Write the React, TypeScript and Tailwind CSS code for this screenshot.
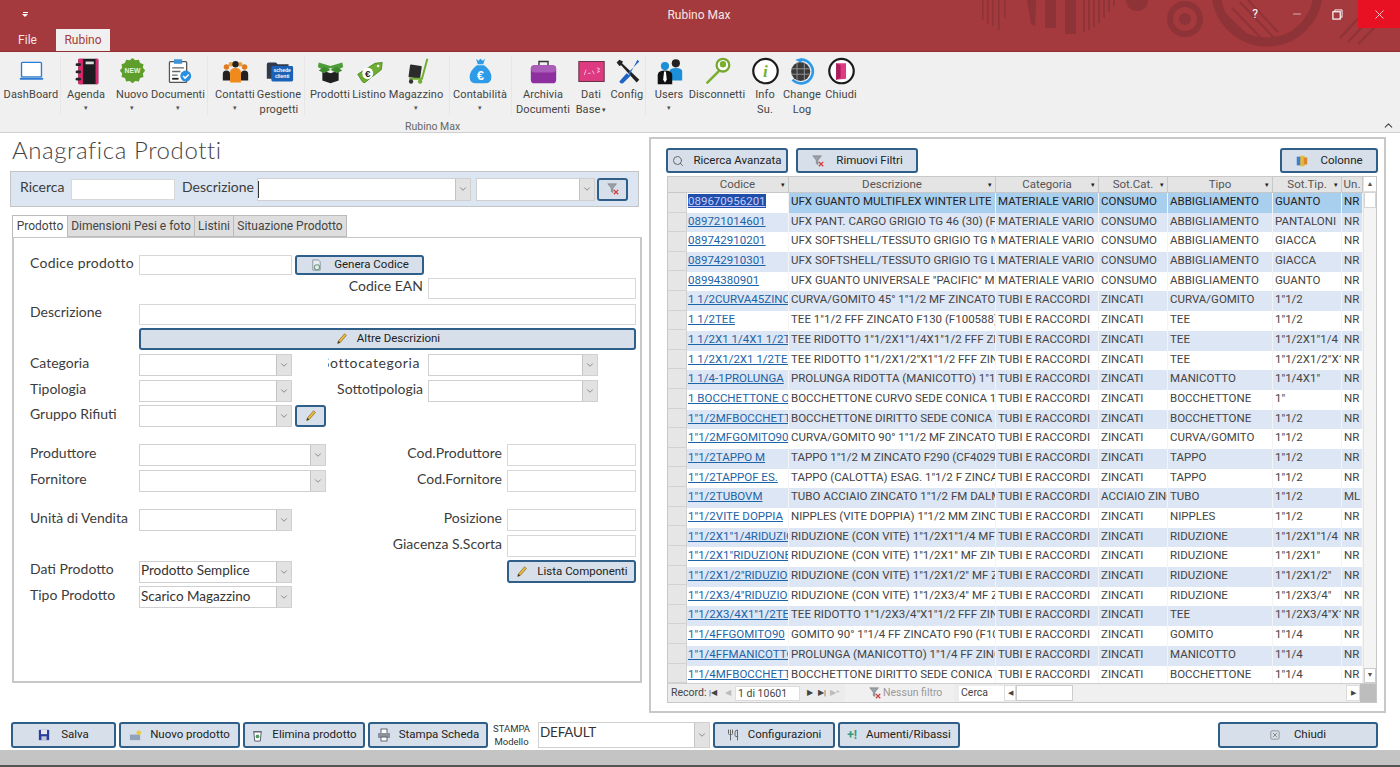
import React from "react";
import { ChevronDown, ChevronUp, Minus, Search, Utensils, X } from "lucide-react";

type Row = [string, string, string, string, string, string, string];

const M = "MATERIALE VARIO";
const T = "TUBI E RACCORDI";
const Z = "ZINCATI";
const rows: Row[] = [
  ["089670956201", "UFX GUANTO MULTIFLEX WINTER LITE M (F5", M, "CONSUMO", "ABBIGLIAMENTO", "GUANTO", "NR"],
  ["089721014601", "UFX PANT. CARGO GRIGIO TG 46 (30) (F5", M, "CONSUMO", "ABBIGLIAMENTO", "PANTALONI", "NR"],
  ["089742910201", "UFX SOFTSHELL/TESSUTO GRIGIO TG M (F5", M, "CONSUMO", "ABBIGLIAMENTO", "GIACCA", "NR"],
  ["089742910301", "UFX SOFTSHELL/TESSUTO GRIGIO TG L (F5", M, "CONSUMO", "ABBIGLIAMENTO", "GIACCA", "NR"],
  ["08994380901", "UFX GUANTO UNIVERSALE \"PACIFIC\" M.", M, "CONSUMO", "ABBIGLIAMENTO", "GUANTO", "NR"],
  ["1 1/2CURVA45ZINCATA", "CURVA/GOMITO 45° 1\"1/2 MF ZINCATO F120", T, Z, "CURVA/GOMITO", "1\"1/2", "NR"],
  ["1 1/2TEE", "TEE 1\"1/2 FFF ZINCATO F130 (F100588)", T, Z, "TEE", "1\"1/2", "NR"],
  ["1 1/2X1 1/4X1 1/2TEE", "TEE RIDOTTO 1\"1/2X1\"1/4X1\"1/2 FFF ZINCATO", T, Z, "TEE", "1\"1/2X1\"1/4", "NR"],
  ["1 1/2X1/2X1 1/2TEE", "TEE RIDOTTO 1\"1/2X1/2\"X1\"1/2 FFF ZINCATO", T, Z, "TEE", "1\"1/2X1/2\"X1\"", "NR"],
  ["1 1/4-1PROLUNGA", "PROLUNGA RIDOTTA (MANICOTTO) 1\"1/4X1\"", T, Z, "MANICOTTO", "1\"1/4X1\"", "NR"],
  ["1 BOCCHETTONE CURVO", "BOCCHETTONE CURVO SEDE CONICA 1\" MF", T, Z, "BOCCHETTONE", "1\"", "NR"],
  ["1\"1/2MFBOCCHETTONE", "BOCCHETTONE DIRITTO SEDE CONICA 1\"1/2", T, Z, "BOCCHETTONE", "1\"1/2", "NR"],
  ["1\"1/2MFGOMITO90", "CURVA/GOMITO 90° 1\"1/2 MF ZINCATO F90", T, Z, "CURVA/GOMITO", "1\"1/2", "NR"],
  ["1\"1/2TAPPO M", "TAPPO 1\"1/2 M ZINCATO F290 (CF402900)", T, Z, "TAPPO", "1\"1/2", "NR"],
  ["1\"1/2TAPPOF ES.", "TAPPO (CALOTTA) ESAG. 1\"1/2 F ZINCATO", T, Z, "TAPPO", "1\"1/2", "NR"],
  ["1\"1/2TUBOVM", "TUBO ACCIAIO ZINCATO 1\"1/2 FM DALMINE", T, "ACCIAIO ZINCATO", "TUBO", "1\"1/2", "ML"],
  ["1\"1/2VITE DOPPIA", "NIPPLES (VITE DOPPIA) 1\"1/2 MM ZINCATO", T, Z, "NIPPLES", "1\"1/2", "NR"],
  ["1\"1/2X1\"1/4RIDUZIONE", "RIDUZIONE (CON VITE) 1\"1/2X1\"1/4 MF ZINCATO", T, Z, "RIDUZIONE", "1\"1/2X1\"1/4", "NR"],
  ["1\"1/2X1\"RIDUZIONE", "RIDUZIONE (CON VITE) 1\"1/2X1\" MF ZINCATO", T, Z, "RIDUZIONE", "1\"1/2X1\"", "NR"],
  ["1\"1/2X1/2\"RIDUZIONE", "RIDUZIONE (CON VITE) 1\"1/2X1/2\" MF ZINCATO", T, Z, "RIDUZIONE", "1\"1/2X1/2\"", "NR"],
  ["1\"1/2X3/4\"RIDUZIONE", "RIDUZIONE (CON VITE) 1\"1/2X3/4\" MF ZINCATO", T, Z, "RIDUZIONE", "1\"1/2X3/4\"", "NR"],
  ["1\"1/2X3/4X1\"1/2TEE", "TEE RIDOTTO 1\"1/2X3/4\"X1\"1/2 FFF ZINCATO", T, Z, "TEE", "1\"1/2X3/4\"X1\"", "NR"],
  ["1\"1/4FFGOMITO90", "GOMITO 90° 1\"1/4 FF ZINCATO F90 (F100", T, Z, "GOMITO", "1\"1/4", "NR"],
  ["1\"1/4FFMANICOTTO", "PROLUNGA (MANICOTTO) 1\"1/4 FF ZINCATO", T, Z, "MANICOTTO", "1\"1/4", "NR"],
  ["1\"1/4MFBOCCHETTONE", "BOCCHETTONE DIRITTO SEDE CONICA 1\"1/4", T, Z, "BOCCHETTONE", "1\"1/4", "NR"],
];

const colWidths = ["w-[102px]", "w-[207px]", "w-[103px]", "w-[69px]", "w-[105px]", "w-[69px]", "w-[21px]"];
const headers = ["Codice", "Descrizione", "Categoria", "Sot.Cat.", "Tipo", "Sot.Tip.", "Un."];

const burst = Array.from({ length: 24 }, (_, i) => {
  const r = i % 2 === 0 ? 14 : 11.8;
  const a = (i * Math.PI) / 12;
  return `${(16 + r * Math.sin(a)).toFixed(1)},${(15 + r * Math.cos(a)).toFixed(1)}`;
}).join(" ");

function Ico({ children }: { children: React.ReactNode }) {
  return (
    <svg viewBox="0 0 32 32" className="w-[29px] h-[29px]">
      {children}
    </svg>
  );
}

const ribbonIcons: Record<string, React.ReactNode> = {
  DashBoard: (
    <Ico>
      <rect x="5" y="6" width="22" height="16" rx="1" fill="#fff" stroke="#2b7cd3" strokeWidth="1.5" />
      <rect x="3" y="23" width="26" height="2" rx="1" fill="#2b7cd3" />
    </Ico>
  ),
  Agenda: (
    <Ico>
      <rect x="7" y="2" width="22" height="28" rx="1.5" fill="#1c1b1f" />
      <rect x="7" y="2" width="5" height="28" fill="#e0246f" />
      <rect x="26" y="2" width="3" height="28" fill="#d9286f" />
      <rect x="4" y="7" width="6" height="3" rx="1.5" fill="#222" />
      <rect x="4" y="15" width="6" height="3" rx="1.5" fill="#222" />
      <rect x="4" y="23" width="6" height="3" rx="1.5" fill="#222" />
      <rect x="15" y="5" width="9" height="3" fill="#ddd" />
    </Ico>
  ),
  Nuovo: (
    <Ico>
      <polygon points={burst} fill="#5d9e2d" />
      <text x="16" y="18" textAnchor="middle" fontSize="7.5" fontWeight="700" fill="#e9f6d8" fontFamily="Liberation Sans, sans-serif">
        NEW
      </text>
    </Ico>
  ),
  Documenti: (
    <Ico>
      <rect x="6" y="5" width="19" height="23" rx="1" fill="#fff" stroke="#555" strokeWidth="1.4" />
      <rect x="11" y="2.5" width="9" height="5" fill="#3f94d8" />
      <path d="M9 12h13M9 16h9M9 20h6" stroke="#666" strokeWidth="1.4" />
      <rect x="9" y="23" width="7" height="2" fill="#222" />
      <circle cx="24" cy="21" r="6" fill="#2b8fe0" />
      <path d="M21 21l2.3 2.3 4-4" stroke="#fff" strokeWidth="1.6" fill="none" />
    </Ico>
  ),
  Contatti: (
    <Ico>
      <circle cx="6" cy="11" r="3" fill="#e07b22" />
      <circle cx="26" cy="11" r="3" fill="#e07b22" />
      <circle cx="11" cy="8" r="2.6" fill="#e8a13c" />
      <circle cx="21" cy="8" r="2.6" fill="#e8a13c" />
      <path d="M2 26v-7q0-4 4-4t4 4v7zM22 26v-7q0-4 4-4t4 4v7z" fill="#222" />
      <circle cx="16" cy="8" r="3.5" fill="#222" />
      <path d="M10 28v-11q0-5 6-5t6 5v11z" fill="#f08a1d" />
    </Ico>
  ),
  "Gestione progetti": (
    <Ico>
      <path d="M2 8q0-2 2-2h8l2 2h12v16H2z" fill="#2f3b4a" />
      <rect x="7" y="10" width="24" height="17" rx="1.5" fill="#1a62b8" />
      <text x="19" y="17" textAnchor="middle" fontSize="5.6" fontWeight="700" fill="#fff" fontFamily="Liberation Sans, sans-serif">
        schede
      </text>
      <text x="19" y="23" textAnchor="middle" fontSize="5.6" fontWeight="700" fill="#fff" fontFamily="Liberation Sans, sans-serif">
        clienti
      </text>
    </Ico>
  ),
  Prodotti: (
    <Ico>
      <path d="M7 15l9 3 9-3v11l-9 3-9-3z" fill="#1f1f1f" />
      <path d="M16 10L3 6l-1 5 7 4 7-3zM16 10l13-4 1 5-7 4-7-3z" fill="#4f9c3a" />
      <path d="M3 15l6 3 7-4-7-3zM29 15l-6 3-7-4 7-3z" fill="#3e8a2e" />
    </Ico>
  ),
  Listino: (
    <Ico>
      <path d="M3 19L22 7l8-1-1 8-18 14q-2 1-3-1z" fill="#6fae33" stroke="#4f8a22" />
      <circle cx="25.5" cy="10" r="1.4" fill="#fff" />
      <ellipse cx="14" cy="18" rx="6" ry="6.5" fill="#fff" />
      <text x="14" y="22" textAnchor="middle" fontSize="11" fontWeight="700" fill="#222" fontFamily="Liberation Sans, sans-serif">
        €
      </text>
    </Ico>
  ),
  Magazzino: (
    <Ico>
      <rect x="8" y="9" width="13" height="14" rx="1" fill="#2b2b2b" transform="rotate(8 14 16)" />
      <path d="M28 2l-6 22H8" stroke="#6fae33" strokeWidth="2.2" fill="none" />
      <circle cx="10" cy="27" r="2.4" fill="#333" />
      <circle cx="20" cy="27" r="2.4" fill="#6fae33" />
    </Ico>
  ),
  Contabilità: (
    <Ico>
      <path d="M11 2l2.500 2 2.500-2 2.500 2 2.500-2-2 6h-6z" fill="#2e9be8" />
      <path d="M12 9h8q8 6 8 13 0 7-7 7H11q-7 0-7-7 0-7 8-13z" fill="#2e9be8" />
      <text x="16" y="25" textAnchor="middle" fontSize="14" fontWeight="700" fill="#fff" fontFamily="Liberation Sans, sans-serif">
        €
      </text>
    </Ico>
  ),
  "Archivia Documenti": (
    <Ico>
      <path d="M11 9V5h10v4" stroke="#333" strokeWidth="1.5" fill="none" />
      <rect x="2" y="9" width="28" height="20" rx="4" fill="#8d2f9e" />
      <rect x="2" y="9" width="28" height="8" rx="4" fill="#a95cb8" />
    </Ico>
  ),
  "Dati Base": (
    <Ico>
      <rect x="2" y="5" width="28" height="22" fill="#dd3a82" stroke="#5a2a3c" strokeWidth="1" />
      <path d="M8 20l2-6M12 18h3M17 15l2 4M22 12l3 1-2 2 2 1-3 1" stroke="#f6c5da" strokeWidth="1" fill="none" />
    </Ico>
  ),
  Config: (
    <Ico>
      <path d="M7 3l-3 3 3 4 2-1 17 19 3-3L10 7l1-2z" fill="#222" />
      <path d="M27 3l2 2-12 12 3 3-9 9q-3 1-4-2l8-9 3 2z" fill="#1f63c4" />
    </Ico>
  ),
  Users: (
    <Ico>
      <circle cx="23" cy="7" r="4.500" fill="#222" />
      <path d="M16 26V16q0-4 7-4t7 4v10z" fill="#1b8fd8" />
      <circle cx="11" cy="10" r="4.500" fill="#1b8fd8" />
      <path d="M3 30V20q0-5 8-5t8 5v10z" fill="#111" />
      <path d="M10 16h2l1 9-2 3-2-3z" fill="#fff" />
    </Ico>
  ),
  Disconnetti: (
    <Ico>
      <path d="M3 28l14-14 2 2L5 30z" fill="#7bb02e" />
      <circle cx="22" cy="9" r="7" fill="#fff" stroke="#77a832" strokeWidth="2.500" />
      <circle cx="22" cy="8" r="3.500" fill="#7bb02e" />
    </Ico>
  ),
  "Info Su.": (
    <Ico>
      <circle cx="16" cy="15.500" r="13.500" fill="#fff" stroke="#1b1b1b" strokeWidth="2.400" />
      <text x="16" y="22" textAnchor="middle" fontSize="19" fontStyle="italic" fontWeight="700" fill="#7bb02e" fontFamily="Liberation Serif, serif">
        i
      </text>
    </Ico>
  ),
  "Change Log": (
    <Ico>
      <path d="M14 3a13 13 0 1 1-9 22" stroke="#2e9be8" strokeWidth="3" fill="none" />
      <circle cx="14" cy="16" r="10.500" fill="#3a3a3a" />
      <path d="M4 13h20M4 19h20M10 6v20M18 6v20" stroke="#999" strokeWidth="1" />
      <path d="M8 3l7-2v6z" fill="#2e9be8" />
    </Ico>
  ),
  Chiudi: (
    <Ico>
      <circle cx="16" cy="15.500" r="13.500" fill="#fff" stroke="#1b1b1b" strokeWidth="2.400" />
      <path d="M10 7h11v17l-11 1z" fill="#e03a85" />
      <path d="M10 7l5 2v14l-5 2z" fill="#a81f5c" />
    </Ico>
  ),
};

function RibbonItem({ label, width, caret }: { label: string; width: string; caret?: boolean }) {
  const parts = label.split(" ");
  return (
    <div className={`${width} shrink-0 flex flex-col items-center`}>
      <div className="h-[29px] flex items-center justify-center">{ribbonIcons[label]}</div>
      <div className="text-[11px] leading-[15px] text-[#444] text-center mt-[1px] whitespace-nowrap tracking-[0.1px]">
        <div>{parts[0]}</div>
        {parts[1] && (
          <div>
            {parts[1]}
            {label === "Dati Base" && <span className="text-[7px] align-middle"> ▾</span>}
          </div>
        )}
        {caret && <div className="text-[7px] leading-[13px] text-[#555]">▾</div>}
      </div>
    </div>
  );
}

function RibbonSep({ margin = "mx-[2px]" }: { margin?: string }) {
  return <div className={`w-px h-[58px] bg-[#e6e6e6] shrink-0 ${margin}`} />;
}

function Label({ children, className = "" }: { children: React.ReactNode; className?: string }) {
  return <div className={`text-[14px] text-[#3c3c3c] whitespace-nowrap font-['Lato',sans-serif] leading-none pb-[5px] ${className}`}>{children}</div>;
}

function Input({ className = "" }: { className?: string }) {
  return <div className={`h-full bg-white border border-[#d8d8d8] shrink-0 ${className}`} />;
}

function Combo({ className = "", value, valueClass = "pb-[2px]" }: { className?: string; value?: string; valueClass?: string }) {
  return (
    <div className={`h-full bg-white border border-[#d0d0d0] shrink-0 flex items-center ${className}`}>
      <div className={`flex-1 min-w-0 pl-[1px] pr-[2px] text-[13.500px] leading-[17px] text-[#333] whitespace-nowrap overflow-hidden font-['Lato',sans-serif] ${valueClass}`}>{value}</div>
      <div className="w-[15px] h-full bg-[#e2e2e2] border-l border-[#c4c4c4] flex items-center justify-center shrink-0">
        <ChevronDown size={10} strokeWidth={1.500} className="text-[#555]" />
      </div>
    </div>
  );
}

function Pencil() {
  return (
    <svg viewBox="0 0 16 16" className="w-[14px] h-[14px] shrink-0">
      <path d="M3 13l1-3 7-8 2 2-7 8z" fill="#e8b93c" stroke="#7a5a14" strokeWidth="0.700" />
      <path d="M3 13l1-3 2 2z" fill="#333" />
    </svg>
  );
}

function FilterX() {
  return (
    <svg viewBox="0 0 16 16" className="w-[14px] h-[14px] shrink-0">
      <path d="M2 2h10L8 7v5L6 11V7z" fill="#9aa0a8" stroke="#777" strokeWidth="0.600" />
      <path d="M9 9l5 5M14 9l-5 5" stroke="#d23a3a" strokeWidth="1.500" />
    </svg>
  );
}

function Btn({ className = "", icon, children, gap = "gap-[11px]" }: { className?: string; icon?: React.ReactNode; children?: React.ReactNode; gap?: string }) {
  return (
    <div className={`h-full shrink-0 flex items-center justify-center ${gap} bg-[#d7e0ea] border-2 border-[#2f5f88] rounded-[3px] text-[11.500px] text-[#222] whitespace-nowrap font-['Roboto',sans-serif] ${className}`}>
      {icon}
      {children && <span>{children}</span>}
    </div>
  );
}

function Table() {
  return (
    <div className="mt-[3px] ml-[16px] mr-[7px] h-[527px] border border-[#c8c8c8] flex flex-col bg-white font-['Roboto',sans-serif]">
      <div className="flex flex-1 min-h-0">
        <div className="w-[19px] shrink-0 bg-[#e6e6e6] flex flex-col">
          <div className="h-[16px] bg-[#e4e4e4] border-b border-[#c8c8c8]" />
          {rows.map((r) => (
            <div key={r[0]} className="h-[19.700px] border-b border-r border-[#d2d2d2]" />
          ))}
        </div>
        <div className="w-[676px] shrink-0 flex flex-col overflow-hidden text-[11.500px] text-[#444]">
          <div className="h-[16px] flex bg-[#e4e4e4] border-b border-[#c8c8c8] shrink-0">
            {headers.map((h, i) => (
              <div key={h} className={`${colWidths[i]} relative text-center leading-[15px] text-[#555] border-r border-[#c8c8c8] shrink-0 overflow-hidden`}>
                {h}
                {i < 6 && <span className="absolute right-[3px] top-[1px] text-[7px] text-[#222]">▾</span>}
              </div>
            ))}
          </div>
          {rows.map((r, ri) => (
            <div key={r[0]} className={`h-[19.700px] flex shrink-0 leading-[16px] ${ri === 0 ? "bg-[#a9cfef] text-[#222]" : ri % 2 === 1 ? "bg-[#dde6f4]" : "bg-white"}`}>
              {r.map((c, ci) => (
                <div key={ci} className={`${colWidths[ci]} shrink-0 overflow-hidden whitespace-nowrap border-r border-[#f4f4f4] ${ci === 0 ? "pl-[1px]" : "pl-[2px]"} ${ci === 0 && ri === 0 ? "bg-white" : ""}`}>
                  {ci === 0 ? (
                    <span className={`underline ${ri === 0 ? "bg-[#1f4fa8] text-[#c9c9ff]" : "text-[#1c64a8]"}`}>{c}</span>
                  ) : (
                    c
                  )}
                </div>
              ))}
            </div>
          ))}
        </div>
        <div className="flex-1 flex flex-col items-stretch bg-white border-l border-[#e4e4e4]">
          <div className="h-[15px] flex items-center justify-center text-[#555] border-b border-[#ddd]">
            <span className="text-[7px]">▲</span>
          </div>
          <div className="h-[16px] bg-white border border-[#d4d4d4]" />
          <div className="flex-1 bg-[#f4f4f4]" />
          <div className="h-[15px] flex items-center justify-center text-[#555] border border-[#ccc] bg-white">
            <span className="text-[7px]">▼</span>
          </div>
        </div>
      </div>
      <div className="h-[19px] shrink-0 flex items-center bg-[#ececec] border-t border-[#cfcfcf] text-[10.500px] text-[#444]">
        <span className="ml-[3px] w-[38px]">Record:</span>
        <span className="text-[8px] w-[16px]">|◀</span>
        <span className="text-[8px] w-[10px] text-[#bbb]">◀</span>
        <div className="w-[65px] h-[15px] bg-white border border-[#ddd] leading-[13px] pl-[2px]">1 di 10601</div>
        <span className="text-[8px] w-[16px] text-center ml-[2px]">▶</span>
        <span className="text-[8px] w-[12px]">▶|</span>
        <span className="text-[8px] w-[15px] text-[#bbb]">▶*</span>
        <div className="w-[109px] h-[18px] flex items-center pl-[23px] gap-[1px] text-[#999] bg-[#f0f0f0]">
          <FilterX />
          <span className="whitespace-nowrap">Nessun filtro</span>
        </div>
        <div className="ml-[5px] w-[45px] h-[15px] bg-white leading-[13px] pl-[2px]">Cerca</div>
        <div className="w-[12px] h-[16px] bg-white border border-[#ddd] text-center text-[7px] leading-[14px]">◀</div>
        <div className="w-[57px] h-[16px] bg-white border border-[#ccc]" />
        <div className="w-[273px] h-[16px] bg-[#f0f0f0]" />
        <div className="w-[14px] h-[16px] bg-white border border-[#ddd] text-center text-[7px] leading-[14px]">▶</div>
        <div className="flex-1 h-full bg-[#bdbdbd]" />
      </div>
    </div>
  );
}

export default function App() {
  return (
    <div className="w-[1400px] h-[767px] overflow-hidden flex flex-col bg-white font-['Roboto',sans-serif]">
      {/* Title bar */}
      <div className="relative h-[52px] shrink-0 bg-[#a4393e] border-b border-[#8f2f33] text-white">
        <svg viewBox="0 0 420 52" className="absolute right-0 top-0 w-[420px] h-[52px]">
          <g fill="#8e3337">
            <path d="M2 0h1.500v20H2zM7 0h1.500v24H7zM12 0h1.500v26H12zM18 0h1.500v30H18zM24 0h1.500v18H24z" />
            <path d="M47 0h9l-1 26-4-2zM65 0h11v28H65zM85 0h11v34H85zM103 0h2v32h-2zM108 0h2v30h-2zM113 0h2v27h-2zM118 0h2v23h-2zM123 0h2v18h-2zM128 0h2v12h-2zM133 0h2v6h-2z" />
            <circle cx="157" cy="0" r="11" />
          </g>
          <circle cx="205" cy="19" r="15" fill="none" stroke="#8e3337" strokeWidth="6" />
          <circle cx="205" cy="19" r="6" fill="#8e3337" />
          <circle cx="287" cy="-9" r="51" fill="none" stroke="#8e3337" strokeWidth="9" />
          <path d="M245 14l28 27M252 8l32 33M260 2l34 36M268 0l30 32M360 38l28-30M368 42l30-32M378 44l22-22" stroke="#8e3337" strokeWidth="2" />
        </svg>
        <div className="relative h-[28px] flex items-center">
          <div className="ml-[22px] flex flex-col items-center">
            <div className="w-[5px] h-px bg-white" />
            <div className="w-0 h-0 mt-[1px] border-x-[3px] border-x-transparent border-t-[3px] border-t-white" />
          </div>
          <div className="absolute left-0 right-0 top-[8px] text-center text-[12px] leading-[15px] text-[#f7e6e6] pr-[2px]">Rubino Max</div>
          <div className="ml-auto flex h-full items-center">
            <span className="w-[42px] text-center text-[12px]">?</span>
            <div className="w-[41px] flex justify-center">
              <Minus size={12} strokeWidth={1.200} />
            </div>
            <div className="w-[41px] flex justify-center">
              <svg viewBox="0 0 12 12" className="w-[11px] h-[11px]">
                <rect x="1" y="3" width="8" height="8" fill="none" stroke="#fff" strokeWidth="1.300" />
                <path d="M3 3V1h8v8H9" fill="none" stroke="#fff" strokeWidth="1" />
              </svg>
            </div>
            <div className="w-[42px] h-full bg-[#e81123] flex items-center justify-center">
              <X size={15} strokeWidth={1.200} />
            </div>
          </div>
        </div>
        <div className="h-[23px] flex items-end text-[12px]">
          <div className="w-[56px] text-center pb-[3px] text-[#f7e6e6] leading-[15px] pr-[1px]">File</div>
          <div className="w-[54px] h-[22px] bg-[#f0f0f0] text-center leading-[22px] text-[#a4393e]">Rubino</div>
        </div>
      </div>

      {/* Ribbon */}
      <div className="relative h-[81px] shrink-0 bg-[#f0f0f0] border-b border-[#cfcfcf] flex pt-[5px] pl-[4px]">
        <RibbonItem label="DashBoard" width="w-[54px]" />
        <RibbonSep />
        <RibbonItem label="Agenda" width="w-[46px]" caret />
        <RibbonItem label="Nuovo" width="w-[46px]" caret />
        <RibbonItem label="Documenti" width="w-[46px]" caret />
        <RibbonSep margin="mx-[6px]" />
        <RibbonItem label="Contatti" width="w-[42px]" caret />
        <RibbonItem label="Gestione progetti" width="w-[46px]" />
        <RibbonSep />
        <RibbonItem label="Prodotti" width="w-[46px]" />
        <RibbonItem label="Listino" width="w-[32px]" />
        <RibbonItem label="Magazzino" width="w-[62px]" caret />
        <RibbonSep />
        <RibbonItem label="Contabilità" width="w-[56px]" caret />
        <RibbonSep margin="mx-[3px]" />
        <RibbonItem label="Archivia Documenti" width="w-[56px]" />
        <RibbonItem label="Dati Base" width="w-[40px]" />
        <RibbonItem label="Config" width="w-[32px]" />
        <RibbonSep />
        <RibbonItem label="Users" width="w-[42px]" caret />
        <RibbonItem label="Disconnetti" width="w-[54px]" />
        <RibbonItem label="Info Su." width="w-[42px]" />
        <RibbonItem label="Change Log" width="w-[32px]" />
        <RibbonItem label="Chiudi" width="w-[46px]" />
        <div className="absolute left-[405px] bottom-[-2px] text-[10.500px] leading-[15px] text-[#666]">Rubino Max</div>
        <ChevronUp size={13} strokeWidth={2} className="absolute right-[5px] bottom-[0px] text-[#444]" />
      </div>

      {/* Main */}
      <div className="flex-1 min-h-0 flex flex-col">
        <div className="h-[580px] shrink-0 flex">
          {/* Left */}
          <div className="w-[649px] shrink-0 pl-[10px]">
            <div className="h-[38px] pl-[2px] text-[24px] leading-[34px] text-[#444] font-['Lato',sans-serif] font-light tracking-[0.6px]">Anagrafica Prodotti</div>
            <div className="w-[629px] h-[36px] bg-[#dbe6f2] border border-[#c4c4c4] flex items-center pl-[9px]">
              <Label className="w-[51px] text-[13.500px]">Ricerca</Label>
              <div className="h-[21px]">
                <Input className="w-[104px]" />
              </div>
              <Label className="w-[82px] pl-[7px] text-[13.500px]">Descrizione</Label>
              <div className="h-[23px]">
                <Combo className="w-[214px]" value={"\u00a0"} valueClass="h-[17px] border-l border-[#333]" />
              </div>
              <div className="h-[23px] ml-[5px]">
                <Combo className="w-[119px]" />
              </div>
              <div className="h-[23px] ml-[2px]">
                <Btn className="w-[31px] text-[#333]" icon={<FilterX />} />
              </div>
            </div>
            <div className="mt-[8px] ml-[2px] h-[22px] flex text-[12px] text-[#444]">
              <div className="w-[56px] bg-white border border-b-0 border-[#bbb] text-center leading-[21px]">Prodotto</div>
              <div className="w-[127px] bg-[#dedede] border border-[#bbb] border-l-0 text-center leading-[21px]">Dimensioni Pesi e foto</div>
              <div className="w-[39px] bg-[#dedede] border border-[#bbb] border-l-0 text-center leading-[21px]">Listini</div>
              <div className="w-[113px] bg-[#dedede] border border-[#bbb] border-l-0 text-center leading-[21px]">Situazione Prodotto</div>
            </div>
            <div className="ml-[2px] w-[630px] h-[446px] border-2 border-t border-[#c8c8c8] pl-[16px] pr-[4px] pt-[17px] flex flex-col">
              <div className="flex items-center h-[20px]">
                <Label className="w-[109px] tracking-[0.25px]">Codice prodotto</Label>
                <Input className="w-[153px]" />
                <div className="h-full ml-[3px]">
                  <Btn
                    className="w-[129px]"
                    icon={
                      <svg viewBox="0 0 14 14" className="w-[13px] h-[13px]">
                        <path d="M3 1h6l2 2v9H3z" fill="#e8edf3" stroke="#8a939e" />
                        <circle cx="7.500" cy="9" r="2.800" fill="none" stroke="#6f9a7a" strokeWidth="1.200" />
                      </svg>
                    }
                  >
                    Genera Codice
                  </Btn>
                </div>
              </div>
              <div className="flex items-center h-[21px] mt-[3px] justify-end">
                <Label className="mr-[5px]">Codice EAN</Label>
                <Input className="w-[208px]" />
              </div>
              <div className="flex items-center h-[21px] mt-[5px]">
                <Label className="w-[109px]">Descrizione</Label>
                <Input className="w-[497px]" />
              </div>
              <div className="flex h-[22px] mt-[3px] pl-[109px]">
                <Btn className="w-[497px] bg-[#cfd9e4]" gap="gap-[8px]" icon={<Pencil />}>Altre Descrizioni</Btn>
              </div>
              <div className="flex items-center h-[22px] mt-[4px]">
                <Label className="w-[109px]">Categoria</Label>
                <Combo className="w-[153px]" />
                <div className="w-[136px] flex justify-end pr-[8px]">
                  <div className="w-[92px] flex justify-end overflow-hidden">
                    <Label className="tracking-[0.6px] shrink-0">Sottocategoria</Label>
                  </div>
                </div>
                <Combo className="w-[170px]" />
              </div>
              <div className="flex items-center h-[22px] mt-[4px]">
                <Label className="w-[109px]">Tipologia</Label>
                <Combo className="w-[153px]" />
                <div className="w-[136px] flex justify-end pr-[5px]">
                  <Label>Sottotipologia</Label>
                </div>
                <Combo className="w-[170px]" />
              </div>
              <div className="flex items-center h-[22px] mt-[3px]">
                <Label className="w-[109px]">Gruppo Rifiuti</Label>
                <Combo className="w-[153px]" />
                <div className="h-full ml-[3px]">
                  <Btn className="w-[31px]" icon={<Pencil />} />
                </div>
              </div>
              <div className="flex items-center h-[22px] mt-[17px]">
                <Label className="w-[109px]">Produttore</Label>
                <Combo className="w-[187px]" />
                <Label className="ml-auto mr-[5px]">Cod.Produttore</Label>
                <Input className="w-[129px]" />
              </div>
              <div className="flex items-center h-[22px] mt-[4px]">
                <Label className="w-[109px]">Fornitore</Label>
                <Combo className="w-[187px]" />
                <Label className="ml-auto mr-[5px]">Cod.Fornitore</Label>
                <Input className="w-[129px]" />
              </div>
              <div className="flex items-center h-[22px] mt-[17px]">
                <Label className="w-[109px]">Unità di Vendita</Label>
                <Combo className="w-[153px]" />
                <Label className="ml-auto mr-[5px]">Posizione</Label>
                <Input className="w-[129px]" />
              </div>
              <div className="flex items-center h-[22px] mt-[4px] justify-end">
                <Label className="mr-[5px]">Giacenza S.Scorta</Label>
                <Input className="w-[129px]" />
              </div>
              <div className="flex items-center h-[23px] mt-[3px]">
                <Label className="w-[109px]">Dati Prodotto</Label>
                <div className="h-[22px]">
                  <Combo className="w-[153px]" value="Prodotto Semplice" />
                </div>
                <div className="h-full ml-auto">
                  <Btn className="w-[129px]" gap="gap-[8px]" icon={<Pencil />}>Lista Componenti</Btn>
                </div>
              </div>
              <div className="flex items-center h-[22px] mt-[3px]">
                <Label className="w-[109px]">Tipo Prodotto</Label>
                <Combo className="w-[153px]" value="Scarico Magazzino" />
              </div>
            </div>
          </div>

          {/* Right */}
          <div className="w-[737px] shrink-0 h-[576px] mt-[4px] border-2 border-[#c8c8c8] flex flex-col">
            <div className="h-[25px] mt-[9px] flex pl-[15px] pr-[6px] shrink-0">
              <Btn className="w-[122px]" gap="gap-[9px]" icon={<Search size={12} className="text-[#666]" />}>Ricerca Avanzata</Btn>
              <Btn className="w-[122px] ml-[8px]" icon={<FilterX />}>Rimuovi Filtri</Btn>
              <Btn
                className="w-[98px] ml-auto"
                icon={
                  <svg viewBox="0 0 16 16" className="w-[14px] h-[14px]">
                    <rect x="2" y="3" width="5" height="10" fill="#3f7fd0" />
                    <rect x="6" y="2" width="5" height="12" fill="#e8b93c" />
                    <rect x="10" y="4" width="4" height="8" fill="#d8892c" />
                  </svg>
                }
              >
                Colonne
              </Btn>
            </div>
            <Table />
          </div>
        </div>

        {/* Bottom buttons */}
        <div className="h-[26px] mt-[9px] shrink-0 flex items-center pl-[11px]">
          <Btn className="w-[105px]" icon={<svg viewBox="0 0 14 14" className="w-[12px] h-[12px]"><rect x="1" y="1" width="12" height="12" fill="#2b3f9c" /><rect x="3.500" y="1" width="7" height="5" fill="#e6e6f4" /><rect x="4" y="8.500" width="6" height="4.500" fill="#c4c8dc" /></svg>}>Salva</Btn>
          <Btn className="w-[121px] ml-[3px]" gap="gap-[8px]" icon={<svg viewBox="0 0 14 14" className="w-[13px] h-[13px]"><rect x="1" y="6" width="11" height="6" fill="#8fa4bb" /><circle cx="10.500" cy="4" r="2.500" fill="#e8c83c" /></svg>}>Nuovo prodotto</Btn>
          <Btn className="w-[122px] ml-[3px]" gap="gap-[8px]" icon={<svg viewBox="0 0 14 14" className="w-[13px] h-[13px]"><path d="M3 3h8l-1 10H4z" fill="#fff" stroke="#556" /><path d="M2.500 3h9" stroke="#556" /><circle cx="7" cy="8" r="2" fill="#4f9c5a" /></svg>}>Elimina prodotto</Btn>
          <Btn className="w-[120px] ml-[3px]" gap="gap-[8px]" icon={<svg viewBox="0 0 14 14" className="w-[14px] h-[14px]"><rect x="4" y="1" width="6" height="5" fill="#fff" stroke="#667" /><rect x="1" y="5" width="12" height="5" fill="#8a929c" /><rect x="4" y="9" width="6" height="4" fill="#fff" stroke="#667" /></svg>}>Stampa Scheda</Btn>
          <div className="w-[37px] ml-[5px] text-[9.500px] leading-[13px] text-center text-[#333]">
            STAMPA
            <br />
            Modello
          </div>
          <div className="h-[26px] ml-[8px]">
            <Combo className="w-[172px]" value="DEFAULT" valueClass="pb-[6px] tracking-[-0.2px]" />
          </div>
          <Btn className="w-[122px] ml-[3px]" gap="gap-[9px]" icon={<Utensils size={12} className="text-[#666]" />}>Configurazioni</Btn>
          <Btn className="w-[122px] ml-[3px]" gap="gap-[9px]" icon={<span className="text-[12px] text-[#3a9a7a] leading-none font-bold">+!</span>}>Aumenti/Ribassi</Btn>
          <Btn
            className="w-[160px] ml-[258px]"
            gap="gap-[14px]"
            icon={
              <svg viewBox="0 0 12 12" className="w-[10px] h-[10px]">
                <rect x="1" y="1" width="10" height="10" rx="1.500" fill="none" stroke="#888" />
                <path d="M3.500 3.500l5 5M8.500 3.500l-5 5" stroke="#777" />
              </svg>
            }
          >
            Chiudi
          </Btn>
        </div>

        {/* Status bar */}
        <div className="mt-[2px] flex-1 bg-[#c4c4c4] border-b-2 border-[#555]" />
      </div>
    </div>
  );
}
